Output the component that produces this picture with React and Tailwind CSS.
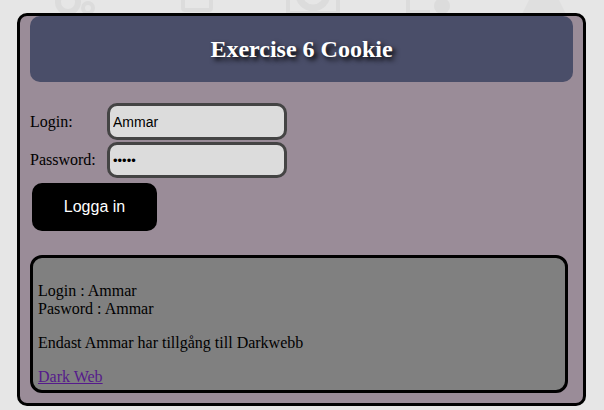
import React from 'react';

const BgIcons = () => (
  <svg className="absolute left-0 top-0" width="604" height="20" viewBox="0 0 604 20" fill="none">
    <g stroke="#dcdcdc" strokeWidth="6">
      <circle cx="68" cy="2" r="10" />
      <circle cx="88" cy="8" r="5" strokeWidth="4" />
      <rect x="183" y="-10" width="28" height="20" rx="2" strokeWidth="4" />
      <path d="M288 -4 L288 13 L338 13 L338 -4" strokeWidth="4" />
      <circle cx="313" cy="-6" r="14" strokeWidth="7" />
      <path d="M408 -4 L408 12 L430 12" strokeWidth="4" />
      <circle cx="442" cy="6" r="8" fill="#dcdcdc" stroke="none" />
    </g>
    <path d="M519 20 L534 -10 L554 -10 L569 20 Z" fill="#dfdfdf" />
  </svg>
);

export default function App() {
  return (
    <div className="relative min-h-[410px] bg-[#e6e6e6] pt-[13px] pl-[17px] font-['Liberation_Serif',serif] text-black">
      <BgIcons />
      <div className="relative w-[569px] h-[393px] rounded-[10px] border-[3px] border-black bg-[#9a8c98] px-[10px]">
        <div className="flex h-[66px] items-center justify-center rounded-[10px] bg-[#4a4e69]">
          <h1 className="text-2xl font-bold text-white [text-shadow:3px_3px_5px_#000]">Exercise 6 Cookie</h1>
        </div>

        <div className="mt-[21px] flex flex-col gap-[2px]">
          <div className="flex items-center">
            <label className="w-[77px] text-base">Login:</label>
            <input
              type="text"
              defaultValue="Ammar"
              className="h-[37px] w-[180px] rounded-[10px] border-[3px] border-[#444] bg-[#dcdcdc] px-[3px] font-['Liberation_Sans',sans-serif] text-[14px] text-black outline-none"
            />
          </div>
          <div className="flex items-center">
            <label className="w-[77px] text-base">Password:</label>
            <input
              type="password"
              defaultValue="Ammar"
              className="h-[36px] w-[180px] rounded-[10px] border-[3px] border-[#444] bg-[#dcdcdc] px-[3px] font-['Liberation_Sans',sans-serif] text-[13px] text-black outline-none"
            />
          </div>
        </div>

        <button className="ml-[2px] mt-[5px] h-[48px] w-[125px] rounded-[10px] bg-black font-['Liberation_Sans',sans-serif] text-base text-white">
          Logga in
        </button>

        <div className="mt-[24px] h-[138px] w-[538px] rounded-[12px] border-[3px] border-black bg-[#808080] px-[5px] pt-[8px] text-base leading-[18px]">
          <p className="mt-[16px]">
            Login : Ammar
            <br />
            Pasword : Ammar
          </p>
          <p className="mt-[16px]">Endast Ammar har tillgång till Darkwebb</p>
          <p className="mt-[16px]">
            <a href="#" className="text-[#551a8b] underline">Dark Web</a>
          </p>
        </div>
      </div>
    </div>
  );
}
